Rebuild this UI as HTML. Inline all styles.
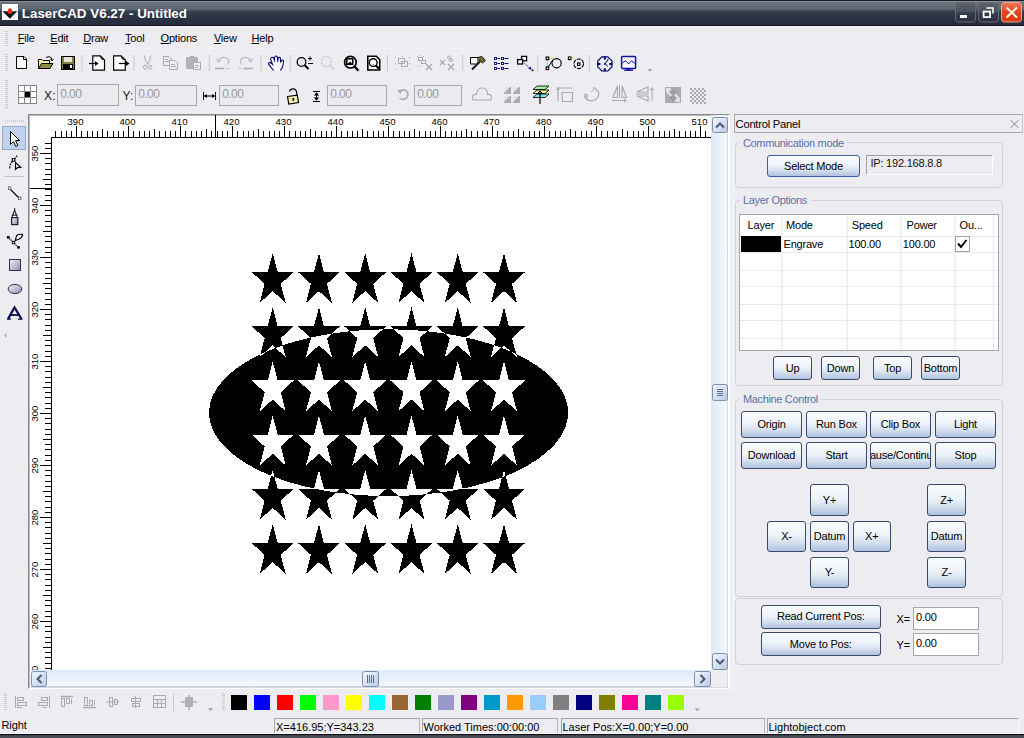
<!DOCTYPE html>
<html><head><meta charset="utf-8"><style>
html,body{margin:0;padding:0;width:1024px;height:738px;overflow:hidden;background:#EDECF1;font-family:"Liberation Sans",sans-serif;font-size:11px;color:#000}
.a{position:absolute}
.t{position:absolute;white-space:pre;line-height:1}
u{text-decoration:underline;text-underline-offset:1px}
</style></head><body>
<div class="a" style="left:0;top:0;width:1024px;height:26px;background:linear-gradient(#151A25 0px,#151A25 1px,#8A8E98 1px,#8A8E98 2px,#6C727C 2px,#5E6874 9px,#4F5A66 10px,#3A4553 11px,#323D4B 12px,#2C3646 16px,#252B3B 25px,#0F131C 25px,#0F131C 26px)"></div><div class="a" style="left:0;top:26px;width:1024px;height:1px;background:#F6F7FB"></div>
<svg class="a" style="left:2px;top:4px" width="16" height="16">
<rect x="0" y="0" width="16" height="16" fill="#fff"/>
<path d="M0.4 7.2 L15.4 7.2 L7.9 14.7 Z" fill="#0C1622"/>
<ellipse cx="8" cy="7.2" rx="2.2" ry="2.9" fill="#E52A14"/>
</svg>
<div class="t" style="left:21.80px;top:6.56px;font-size:13.4px;letter-spacing:0px;color:#fff;font-weight:bold">LaserCAD V6.27 - Untitled</div>

<svg class="a" style="left:950px;top:0" width="74" height="25">
 <defs>
  <linearGradient id="tbg" x1="0" y1="0" x2="0" y2="1"><stop offset="0" stop-color="#5E646E"/><stop offset="0.45" stop-color="#4A525E"/><stop offset="0.55" stop-color="#343C4A"/><stop offset="1" stop-color="#2A3242"/></linearGradient>
  <linearGradient id="tbr" x1="0" y1="0" x2="0" y2="1"><stop offset="0" stop-color="#f0785a"/><stop offset="0.5" stop-color="#e2441e"/><stop offset="1" stop-color="#d83a14"/></linearGradient>
 </defs>
 <rect x="5.5" y="2.5" width="20" height="19.5" rx="3" fill="url(#tbg)" stroke="#666A72"/>
 <rect x="10" y="15" width="7" height="3" fill="#fff"/>
 <rect x="28.5" y="2.5" width="20" height="19.5" rx="3" fill="url(#tbg)" stroke="#666A72"/>
 <path d="M36.5 8 h6.5 v5.5" fill="none" stroke="#fff" stroke-width="1.5"/>
 <rect x="33.6" y="11.6" width="6.5" height="5.5" fill="none" stroke="#fff" stroke-width="1.8"/>
 <rect x="51.5" y="2.5" width="20" height="19.5" rx="3" fill="url(#tbr)" stroke="#f3a48f"/>
 <path d="M56.5 7.5 L67 17.5 M67 7.5 L56.5 17.5" stroke="#FFF6E6" stroke-width="2"/>
</svg>
<svg class="a" style="left:0;top:0" width="20" height="50"><rect x="5" y="31" width="3" height="1" fill="#C9C8D0"/><rect x="5" y="33" width="3" height="1" fill="#C9C8D0"/><rect x="5" y="35" width="3" height="1" fill="#C9C8D0"/><rect x="5" y="37" width="3" height="1" fill="#C9C8D0"/><rect x="5" y="39" width="3" height="1" fill="#C9C8D0"/><rect x="5" y="41" width="3" height="1" fill="#C9C8D0"/><rect x="5" y="43" width="3" height="1" fill="#C9C8D0"/><rect x="5" y="45" width="3" height="1" fill="#C9C8D0"/></svg><div class="t" style="left:17.80px;top:32.89px;font-size:11px;letter-spacing:-0.2px"><u>F</u>ile</div><div class="t" style="left:50.30px;top:32.89px;font-size:11px;letter-spacing:-0.2px"><u>E</u>dit</div><div class="t" style="left:83.20px;top:32.89px;font-size:11px;letter-spacing:-0.2px"><u>D</u>raw</div><div class="t" style="left:125.00px;top:32.89px;font-size:11px;letter-spacing:-0.2px"><u>T</u>ool</div><div class="t" style="left:160.60px;top:32.89px;font-size:11px;letter-spacing:-0.2px"><u>O</u>ptions</div><div class="t" style="left:213.90px;top:32.89px;font-size:11px;letter-spacing:-0.2px"><u>V</u>iew</div><div class="t" style="left:251.50px;top:32.89px;font-size:11px;letter-spacing:-0.2px"><u>H</u>elp</div>
<svg class="a" style="left:0;top:0" width="1024" height="112"><rect x="0" y="48" width="657" height="1" fill="#F1F1F4"/><rect x="656" y="48" width="1" height="28" fill="#EFEFF3"/><rect x="0" y="79" width="899" height="1" fill="#F1F1F4"/><rect x="897" y="79" width="1" height="33" fill="#EFEFF3"/><rect x="5" y="54" width="3" height="1" fill="#C9C8D0"/><rect x="5" y="56" width="3" height="1" fill="#C9C8D0"/><rect x="5" y="58" width="3" height="1" fill="#C9C8D0"/><rect x="5" y="60" width="3" height="1" fill="#C9C8D0"/><rect x="5" y="62" width="3" height="1" fill="#C9C8D0"/><rect x="5" y="64" width="3" height="1" fill="#C9C8D0"/><rect x="5" y="66" width="3" height="1" fill="#C9C8D0"/><rect x="5" y="68" width="3" height="1" fill="#C9C8D0"/><rect x="5" y="70" width="3" height="1" fill="#C9C8D0"/><rect x="5" y="80" width="3" height="1" fill="#C9C8D0"/><rect x="5" y="82" width="3" height="1" fill="#C9C8D0"/><rect x="5" y="84" width="3" height="1" fill="#C9C8D0"/><rect x="5" y="86" width="3" height="1" fill="#C9C8D0"/><rect x="5" y="88" width="3" height="1" fill="#C9C8D0"/><rect x="5" y="90" width="3" height="1" fill="#C9C8D0"/><rect x="5" y="92" width="3" height="1" fill="#C9C8D0"/><rect x="5" y="94" width="3" height="1" fill="#C9C8D0"/><rect x="5" y="96" width="3" height="1" fill="#C9C8D0"/><rect x="5" y="98" width="3" height="1" fill="#C9C8D0"/><rect x="5" y="100" width="3" height="1" fill="#C9C8D0"/><rect x="5" y="102" width="3" height="1" fill="#C9C8D0"/><rect x="5" y="104" width="3" height="1" fill="#C9C8D0"/><rect x="5" y="106" width="3" height="1" fill="#C9C8D0"/><rect x="5" y="108" width="3" height="1" fill="#C9C8D0"/><rect x="81.5" y="55" width="1" height="16" fill="#C8C7CE"/><rect x="133.5" y="55" width="1" height="16" fill="#C8C7CE"/><rect x="208.7" y="55" width="1" height="16" fill="#C8C7CE"/><rect x="260.5" y="55" width="1" height="16" fill="#C8C7CE"/><rect x="289.8" y="55" width="1" height="16" fill="#C8C7CE"/><rect x="387.0" y="55" width="1" height="16" fill="#C8C7CE"/><rect x="462.3" y="55" width="1" height="16" fill="#C8C7CE"/><rect x="537.3" y="55" width="1" height="16" fill="#C8C7CE"/><rect x="588.9" y="55" width="1" height="16" fill="#C8C7CE"/><path d="M16.5 56.5 H24 L26.5 59 V68.5 H16.5 Z" fill="#fff" stroke="#000"/><path d="M23.5 56.5 V59.5 H26.5" fill="none" stroke="#000"/><path d="M38.5 59.5 H42 L43 60.5 H49.5 V68.5 H38.5 Z" fill="#F2F29A" stroke="#000"/><path d="M38.5 68.5 L41.5 63.5 H53 L50 68.5 Z" fill="#8C8C3C" stroke="#000"/><path d="M46 57.5 Q49 55.5 51.5 58 L52 60" fill="none" stroke="#000"/><path d="M50.5 59 L52 61 L53.5 59" fill="none" stroke="#000"/><rect x="61.5" y="56.5" width="13" height="13" fill="#808040" stroke="#000"/><rect x="64" y="57" width="8" height="5" fill="#E6E6D6"/><rect x="63" y="64" width="10" height="5" fill="#000"/><rect x="70" y="65" width="2" height="3" fill="#fff"/><path d="M92.8 55.8 H100.3 L104.5 60 V70.2 H92.8 Z" fill="#fff" stroke="#000" stroke-width="1.2"/><path d="M100.5 56 Q100.5 59.8 104.3 59.8" fill="none" stroke="#000"/><path d="M89 63.5 H97" stroke="#000" stroke-width="1.2"/><path d="M95 61 L98.5 63.5 L95 66 Z" fill="#000"/><path d="M113.6 55.8 H121.1 L125.3 60 V70.2 H113.6 Z" fill="#fff" stroke="#000" stroke-width="1.2"/><path d="M121.3 56 Q121.3 59.8 125.1 59.8" fill="none" stroke="#000"/><path d="M119 63.5 H127" stroke="#000" stroke-width="1.2"/><path d="M126 61 L129.5 63.5 L126 66 Z" fill="#000"/><path d="M144.5 55.5 Q145 61 148 64.5 M150.8 55.5 Q150.3 61 147.3 64.5" stroke="#ABABAF" fill="none"/><ellipse cx="145.2" cy="67.2" rx="1.7" ry="2" fill="none" stroke="#ABABAF"/><ellipse cx="150.2" cy="67.2" rx="1.7" ry="2" fill="none" stroke="#ABABAF"/><path d="M163.5 56.5 H169 L171.5 59 V65.5 H163.5 Z" fill="#EDECF1" stroke="#ABABAF"/><path d="M169.5 60.5 H175 L177.5 63 V69.5 H169.5 Z" fill="#EDECF1" stroke="#ABABAF"/><path d="M165 59.5 H168 M165 61.5 H169 M171 64.5 H175 M171 66.5 H176" stroke="#ABABAF"/><rect x="186.5" y="57.5" width="11" height="11" rx="1" fill="#B4B4B6" stroke="#ABABAF"/><rect x="190" y="56" width="4" height="2" fill="#ABABAF"/><rect x="193.5" y="62.5" width="7" height="7" fill="#F2F2F4" stroke="#ABABAF"/><path d="M195 65.5 H199 M195 67.5 H198" stroke="#ABABAF"/><path d="M218 60 Q223 55.5 228 59 Q230.5 62 227 64.5" fill="none" stroke="#ABABAF"/><path d="M216.5 58.5 L218 62 L221 60" fill="none" stroke="#ABABAF"/><path d="M215 68.5 H224" stroke="#ABABAF" stroke-width="1.5"/><path d="M225.5 68.5 H230" stroke="#ABABAF" stroke-dasharray="1 1"/><path d="M251 60 Q246 55.5 241 59 Q238.5 62 242 64.5" fill="none" stroke="#ABABAF"/><path d="M252.5 58.5 L251 62 L248 60" fill="none" stroke="#ABABAF"/><path d="M244 68.5 H253" stroke="#ABABAF" stroke-width="1.5"/><path d="M238.5 68.5 H243" stroke="#ABABAF" stroke-dasharray="1 1"/><path d="M273.6 70.5 L268.6 64.2 Q268.2 62.5 270 62.4 L272.6 64.4 L270.6 59.2 Q270.6 57.4 272.2 57.3 Q273.6 57.3 274.1 59 L274.6 61.6 L274.5 57.4 Q275.2 56 276.4 56.1 Q277.5 56.4 277.5 58 L277.7 61.6 L278.2 58.2 Q278.9 57.1 280 57.5 Q280.6 58 280.5 59.5 L280.5 62.5 L281.5 60.4 Q282.7 59.4 283.5 60.7 L283.2 64.2 L282.4 67.2 L280.4 70.4" fill="#F8F8FF" stroke="#000068" stroke-width="1.05"/><circle cx="301.5" cy="62" r="4.3" fill="none" stroke="#000" stroke-width="1.3"/><path d="M304.5 65 L308.5 69" stroke="#000" stroke-width="2"/><path d="M308 58.5 H312 M310 56.5 V60.5 M308 63.5 H313" stroke="#000"/><circle cx="326.5" cy="61.5" r="5" fill="none" stroke="#C0C0C4" stroke-width="1.2" stroke-dasharray="1.5 1"/><path d="M330 65.5 L334 69.5" stroke="#C0C0C4" stroke-width="1.5"/><circle cx="350.4" cy="62.2" r="5.8" fill="#fff" stroke="#000" stroke-width="1.7"/><rect x="346.8" y="58.8" width="6" height="5.5" fill="#fff" stroke="#000" stroke-width="1.5"/><path d="M347.5 64 L350 61.5 L352.5 64 Z" fill="#000"/><path d="M354.5 66.5 L358.5 70.8" stroke="#000" stroke-width="2.2"/><path d="M367.8 56.3 H376.3 L379.7 59.7 V70 H367.8 Z" fill="#fff" stroke="#000" stroke-width="1.6"/><circle cx="373.2" cy="62.6" r="3.9" fill="none" stroke="#000" stroke-width="1.4"/><path d="M375.6 65.2 L379 68.8" stroke="#000" stroke-width="2"/><path d="M372 64 L374.5 64 L373.2 65.2 Z" fill="#888"/><rect x="398.5" y="58.5" width="6" height="5" fill="none" stroke="#ABABAF"/><rect x="401.5" y="61.5" width="6" height="5" fill="none" stroke="#ABABAF"/><rect x="395" y="57" width="1" height="1" fill="#ABABAF"/><rect x="402" y="56" width="1" height="1" fill="#ABABAF"/><rect x="409" y="57" width="1" height="1" fill="#ABABAF"/><rect x="395" y="63" width="1" height="1" fill="#ABABAF"/><rect x="409" y="63" width="1" height="1" fill="#ABABAF"/><rect x="395" y="69" width="1" height="1" fill="#ABABAF"/><rect x="402" y="69" width="1" height="1" fill="#ABABAF"/><rect x="409" y="69" width="1" height="1" fill="#ABABAF"/><rect x="418.5" y="57.5" width="4" height="3" fill="none" stroke="#ABABAF"/><rect x="421.5" y="60.5" width="4" height="3" fill="none" stroke="#ABABAF"/><path d="M426 64 L432 70 M432 64 L426 70" stroke="#ABABAF" stroke-width="1.4"/><rect x="417" y="56" width="1" height="1" fill="#ABABAF"/><rect x="420" y="55" width="1" height="1" fill="#ABABAF"/><rect x="423" y="56" width="1" height="1" fill="#ABABAF"/><rect x="417" y="66" width="1" height="1" fill="#ABABAF"/><rect x="420" y="66" width="1" height="1" fill="#ABABAF"/><path d="M440 60 L445 65 M445 60 L440 65 M448 64 L454 70 M454 64 L448 70" stroke="#ABABAF" stroke-width="1.3"/><circle cx="449" cy="57.5" r="1.5" fill="none" stroke="#ABABAF"/><circle cx="451" cy="60" r="1.5" fill="none" stroke="#ABABAF"/><path d="M470.5 57.5 H478 V64 H470.5 Z" fill="#fff" stroke="#000"/><path d="M472 69.5 L480 61.5" stroke="#202020" stroke-width="2.2"/><path d="M477.5 57.5 L482 56.5 L485.5 60.5 L482.5 63 L479 60" fill="#6B6B30" stroke="#000" stroke-width="0.8"/><rect x="494.5" y="57.5" width="2" height="2" fill="#fff" stroke="#000070" stroke-width="0.9"/><path d="M497.5 58.5 H500" stroke="#000070"/><rect x="501.5" y="57.5" width="2" height="2" fill="#fff" stroke="#000070" stroke-width="0.9"/><path d="M504.5 58.5 H508.5" stroke="#000070"/><rect x="494.5" y="62.5" width="2" height="2" fill="#fff" stroke="#000070" stroke-width="0.9"/><path d="M497.5 63.5 H500" stroke="#000070"/><rect x="501.5" y="62.5" width="2" height="2" fill="#fff" stroke="#000070" stroke-width="0.9"/><path d="M504.5 63.5 H508.5" stroke="#000070"/><rect x="494.5" y="67.5" width="2" height="2" fill="#fff" stroke="#000070" stroke-width="0.9"/><path d="M497.5 68.5 H500" stroke="#000070"/><rect x="501.5" y="67.5" width="2" height="2" fill="#fff" stroke="#000070" stroke-width="0.9"/><path d="M504.5 68.5 H508.5" stroke="#000070"/><rect x="521.6" y="56.4" width="5" height="4.4" fill="#fff" stroke="#000" stroke-width="1.3"/><rect x="517.6" y="59.6" width="5" height="4.4" fill="#fff" stroke="#000" stroke-width="1.3"/><path d="M524.5 63.5 L530.5 68.8" stroke="#0000A0" stroke-width="0.9" stroke-dasharray="1.2 0.6"/><path d="M531.5 69.6 L528.2 68.8 L530.6 66.6 Z" fill="#0000A0"/><rect x="531.6" y="69.4" width="1.8" height="1.8" fill="#600020"/><path d="M547.4 59.5 V67.5" stroke="#80D8D8" stroke-width="1.2"/><path d="M548.5 58.3 H554" stroke="#E0E070" stroke-width="1.2"/><circle cx="556.6" cy="63.2" r="4.6" fill="none" stroke="#000" stroke-width="1.15"/><path d="M548 67.5 L552.6 60.2" stroke="#000" stroke-width="1"/><rect x="546.1" y="57" width="2.6" height="2.6" fill="none" stroke="#000" stroke-width="1.1"/><rect x="546.1" y="67" width="2.6" height="2.6" fill="none" stroke="#000" stroke-width="1.1"/><rect x="568.4" y="57" width="2.6" height="2.6" fill="none" stroke="#000" stroke-width="1.1"/><path d="M571.5 58.3 H575" stroke="#E0E070" stroke-width="1.2"/><circle cx="578.7" cy="63.8" r="4.8" fill="none" stroke="#000" stroke-width="1.15" stroke-dasharray="4 1"/><rect x="577.5" y="63" width="2.4" height="2.4" fill="none" stroke="#000" stroke-width="1.1"/><path d="M611.96 66.85 L607.80 71.01 L601.90 71.01 L597.74 66.85 L597.74 60.95 L601.90 56.79 L607.80 56.79 L611.96 60.95 Z" fill="none" stroke="#000070" stroke-width="1.2"/><path d="M604.85 56.5 V59.5 M604.85 68.3 V71.3 M597.4 63.9 H600.4 M609.3 63.9 H612.3" stroke="#000070" stroke-width="2"/><path d="M608.4 59 L605.3 63.6 L607.6 66.6" fill="none" stroke="#000070" stroke-width="1"/><rect x="604" y="63.1" width="1.6" height="1.6" fill="#000070"/><rect x="621.6" y="56.4" width="14" height="12" rx="1" fill="#F4F4FC" stroke="#1010A0" stroke-width="1.5"/><path d="M622.4 63 L625.5 60.8 L628.6 64 L631.6 60.8 L635 63.6" fill="none" stroke="#1010A0" stroke-width="1"/><rect x="626.5" y="68.4" width="4" height="1.4" fill="#1010A0"/><rect x="624.2" y="69.6" width="8.8" height="1.3" fill="#1010A0"/><path d="M647.5 69 H652.5 L650 71.5 Z" fill="#9B9BA2"/><rect x="18.5" y="85.5" width="18" height="18" fill="#fff" stroke="#888"/><path d="M24.5 85.5 V103.5 M30.5 85.5 V103.5 M18.5 91.5 H36.5 M18.5 97.5 H36.5" stroke="#888"/><rect x="25" y="92" width="5" height="5" fill="#000"/></svg><div class="t" style="left:44.00px;top:90.34px;font-size:12px;letter-spacing:0.2px;color:#181818">X:</div><div class="t" style="left:122.50px;top:90.34px;font-size:12px;letter-spacing:0.2px;color:#181818">Y:</div><div class="a" style="left:57px;top:84px;width:62px;height:22px;border:1px solid #A8A8AC;box-sizing:border-box;background:#EBEAEF"></div><div class="t" style="left:60.30px;top:87.64px;font-size:12px;letter-spacing:-0.6px;color:#98989C">0.00</div><div class="a" style="left:135px;top:85px;width:62px;height:21px;border:1px solid #A8A8AC;box-sizing:border-box;background:#EBEAEF"></div><div class="t" style="left:138.30px;top:87.64px;font-size:12px;letter-spacing:-0.6px;color:#98989C">0.00</div><div class="a" style="left:219px;top:85px;width:60px;height:21px;border:1px solid #A8A8AC;box-sizing:border-box;background:#EBEAEF"></div><div class="t" style="left:222.30px;top:87.64px;font-size:12px;letter-spacing:-0.6px;color:#98989C">0.00</div><div class="a" style="left:327px;top:85px;width:60px;height:21px;border:1px solid #A8A8AC;box-sizing:border-box;background:#EBEAEF"></div><div class="t" style="left:330.30px;top:87.64px;font-size:12px;letter-spacing:-0.6px;color:#98989C">0.00</div><div class="a" style="left:414px;top:85px;width:48px;height:21px;border:1px solid #A8A8AC;box-sizing:border-box;background:#EBEAEF"></div><div class="t" style="left:417.30px;top:87.64px;font-size:12px;letter-spacing:-0.6px;color:#98989C">0.00</div><svg class="a" style="left:0;top:76" width="1024" height="36"><g transform="translate(0,-76)"><path d="M203.5 92 V100 M215.5 92 V100 M204 96 H215" stroke="#000"/><path d="M204 96 L207 94 V98 Z M215 96 L212 94 V98 Z" fill="#000"/><path d="M289.5 91.5 Q290 88.8 293 88.8 Q296.5 88.8 296.8 93.5 V95" fill="none" stroke="#000" stroke-width="1.2"/><path d="M287.5 96.5 L297.3 95.2 L298.5 102.5 L288.8 104 Z" fill="#F2F0B0" stroke="#000" stroke-width="1.2"/><rect x="292.5" y="98" width="1.6" height="2.8" fill="#000"/><path d="M313 91.5 H320 M313 101.5 H320 M316.5 93 V100" stroke="#000"/><path d="M316.5 92.2 L313.8 95.5 H319.2 Z M316.5 100.8 L313.8 97.5 H319.2 Z" fill="#000"/><path d="M400 92 Q403 88.5 406.5 91 Q409.5 95 406 98.5 Q402.5 100.5 399.5 98" fill="none" stroke="#ABABAF" stroke-width="1.6"/><path d="M397.5 90 L400.5 94.5 L402 89.5 Z" fill="#ABABAF"/><path d="M474 100 Q472 100 472.5 97 Q473 94 476.5 94.5 Q477 88 482 88 Q487.5 88 487.5 94.5 Q491.5 94 491.5 97.5 Q491.5 100 489 100 Z" fill="none" stroke="#ABABAF" stroke-width="1.2"/><rect x="504" y="87" width="7" height="7" fill="#ABABAF"/><path d="M504 87 L510 87 L504 93 Z" fill="#E5E5E8"/><rect x="513" y="87" width="7" height="7" fill="#ABABAF"/><path d="M513 87 L519 87 L513 93 Z" fill="#E5E5E8"/><rect x="504" y="96" width="7" height="7" fill="#ABABAF"/><path d="M504 96 L510 96 L504 102 Z" fill="#E5E5E8"/><rect x="513" y="96" width="7" height="7" fill="#ABABAF"/><path d="M513 96 L519 96 L513 102 Z" fill="#E5E5E8"/><path d="M533 89.5 L537 86 H549 L545 89.5 Z" fill="#A0F0A0" stroke="#000" stroke-width="0.8"/><path d="M533 93.5 L537 90 H549 L545 93.5 Z" fill="#F0F080" stroke="#000" stroke-width="0.8"/><path d="M533 97.5 L537 94 H549 L545 97.5 Z" fill="#80E0F0" stroke="#000" stroke-width="0.8"/><path d="M540 91 V104" stroke="#000" stroke-width="1.2"/><path d="M537 94 L540 91 L543 94" fill="none" stroke="#000"/><path d="M558 87 V101 M558 88 H572 M562 92.5 H572.5 V101.5 H562.5 Z" fill="none" stroke="#ABABAF" stroke-width="1.2"/><path d="M558 87 L556 90 H560 Z" fill="#ABABAF"/><path d="M586 94 Q584 99 589 100.5 Q595 101.5 598 97 Q600 92 596.5 90" fill="none" stroke="#ABABAF" stroke-width="1.3"/><circle cx="586" cy="96" r="1.8" fill="none" stroke="#ABABAF"/><path d="M591 92 L595 88 M593 88 H596 V91" fill="none" stroke="#ABABAF"/><path d="M613 97.5 L617.5 86 V97.5 Z M626.5 97.5 L622 86 V97.5 Z" fill="none" stroke="#ABABAF" stroke-width="1.2"/><path d="M619.5 85 V98" stroke="#ABABAF"/><path d="M612 100.5 H624" stroke="#ABABAF"/><path d="M624 98.5 L627 100.5 L624 102.5 Z" fill="#ABABAF"/><path d="M637 92 L648 87 V92 Z M637 96 L648 101 V96 Z" fill="none" stroke="#ABABAF" stroke-width="1.2"/><path d="M636 94 H649" stroke="#ABABAF"/><path d="M652 101 V89" stroke="#ABABAF"/><path d="M650 90 L652 87 L654 90 Z" fill="#ABABAF"/><rect x="665.5" y="87.5" width="15" height="15" fill="#E2E2E5" stroke="#ABABAF"/><path d="M670 88 H680 V98 Z M666 92 L676 102 H666 Z" fill="#ABABAF"/><path d="M673 88 L677 92 L673 96 L669 92 Z M673 94 L677 98 L673 102 L669 98 Z" fill="#A0A0A4"/><rect x="690" y="88" width="2" height="2" fill="#ABABAF"/><rect x="690" y="92" width="2" height="2" fill="#ABABAF"/><rect x="690" y="96" width="2" height="2" fill="#ABABAF"/><rect x="690" y="100" width="2" height="2" fill="#ABABAF"/><rect x="692" y="90" width="2" height="2" fill="#ABABAF"/><rect x="692" y="94" width="2" height="2" fill="#ABABAF"/><rect x="692" y="98" width="2" height="2" fill="#ABABAF"/><rect x="692" y="102" width="2" height="2" fill="#ABABAF"/><rect x="694" y="88" width="2" height="2" fill="#ABABAF"/><rect x="694" y="92" width="2" height="2" fill="#ABABAF"/><rect x="694" y="96" width="2" height="2" fill="#ABABAF"/><rect x="694" y="100" width="2" height="2" fill="#ABABAF"/><rect x="696" y="90" width="2" height="2" fill="#ABABAF"/><rect x="696" y="94" width="2" height="2" fill="#ABABAF"/><rect x="696" y="98" width="2" height="2" fill="#ABABAF"/><rect x="696" y="102" width="2" height="2" fill="#ABABAF"/><rect x="698" y="88" width="2" height="2" fill="#ABABAF"/><rect x="698" y="92" width="2" height="2" fill="#ABABAF"/><rect x="698" y="96" width="2" height="2" fill="#ABABAF"/><rect x="698" y="100" width="2" height="2" fill="#ABABAF"/><rect x="700" y="90" width="2" height="2" fill="#ABABAF"/><rect x="700" y="94" width="2" height="2" fill="#ABABAF"/><rect x="700" y="98" width="2" height="2" fill="#ABABAF"/><rect x="700" y="102" width="2" height="2" fill="#ABABAF"/><rect x="702" y="88" width="2" height="2" fill="#ABABAF"/><rect x="702" y="92" width="2" height="2" fill="#ABABAF"/><rect x="702" y="96" width="2" height="2" fill="#ABABAF"/><rect x="702" y="100" width="2" height="2" fill="#ABABAF"/><rect x="704" y="90" width="2" height="2" fill="#ABABAF"/><rect x="704" y="94" width="2" height="2" fill="#ABABAF"/><rect x="704" y="98" width="2" height="2" fill="#ABABAF"/><rect x="704" y="102" width="2" height="2" fill="#ABABAF"/></g></svg>
<div class="a" style="left:28px;top:114px;width:700px;height:573px;border:1px solid #8a8a8e;border-right-color:#fff;border-bottom-color:#fff;background:#fff"></div>
<div class="a" style="left:29px;top:115px;width:1px;height:572px;background:#b9b9be"></div>
<div class="a" style="left:29px;top:115px;width:698px;height:1px;background:#b9b9be"></div>
<svg class="a" style="left:0;top:0" width="1024" height="738"><defs><clipPath id="rclip"><rect x="29" y="115" width="682" height="555"/></clipPath></defs><path stroke="#000" stroke-width="1" fill="none" d="M55.5 131.0 V138 M61.5 131.0 V138 M66.5 131.0 V138 M71.5 131.0 V138 M76.5 126.0 V138 M81.5 131.0 V138 M87.5 131.0 V138 M92.5 131.0 V138 M97.5 131.0 V138 M102.5 129.0 V138 M107.5 131.0 V138 M113.5 131.0 V138 M118.5 131.0 V138 M123.5 131.0 V138 M128.5 126.0 V138 M133.5 131.0 V138 M139.5 131.0 V138 M144.5 131.0 V138 M149.5 131.0 V138 M154.5 129.0 V138 M159.5 131.0 V138 M165.5 131.0 V138 M170.5 131.0 V138 M175.5 131.0 V138 M180.5 126.0 V138 M185.5 131.0 V138 M191.5 131.0 V138 M196.5 131.0 V138 M201.5 131.0 V138 M206.5 129.0 V138 M211.5 131.0 V138 M217.5 131.0 V138 M222.5 131.0 V138 M227.5 131.0 V138 M232.5 126.0 V138 M237.5 131.0 V138 M243.5 131.0 V138 M248.5 131.0 V138 M253.5 131.0 V138 M258.5 129.0 V138 M263.5 131.0 V138 M269.5 131.0 V138 M274.5 131.0 V138 M279.5 131.0 V138 M284.5 126.0 V138 M289.5 131.0 V138 M295.5 131.0 V138 M300.5 131.0 V138 M305.5 131.0 V138 M310.5 129.0 V138 M315.5 131.0 V138 M321.5 131.0 V138 M326.5 131.0 V138 M331.5 131.0 V138 M336.5 126.0 V138 M341.5 131.0 V138 M347.5 131.0 V138 M352.5 131.0 V138 M357.5 131.0 V138 M362.5 129.0 V138 M367.5 131.0 V138 M373.5 131.0 V138 M378.5 131.0 V138 M383.5 131.0 V138 M388.5 126.0 V138 M393.5 131.0 V138 M399.5 131.0 V138 M404.5 131.0 V138 M409.5 131.0 V138 M414.5 129.0 V138 M419.5 131.0 V138 M425.5 131.0 V138 M430.5 131.0 V138 M435.5 131.0 V138 M440.5 126.0 V138 M445.5 131.0 V138 M451.5 131.0 V138 M456.5 131.0 V138 M461.5 131.0 V138 M466.5 129.0 V138 M471.5 131.0 V138 M477.5 131.0 V138 M482.5 131.0 V138 M487.5 131.0 V138 M492.5 126.0 V138 M497.5 131.0 V138 M503.5 131.0 V138 M508.5 131.0 V138 M513.5 131.0 V138 M518.5 129.0 V138 M523.5 131.0 V138 M529.5 131.0 V138 M534.5 131.0 V138 M539.5 131.0 V138 M544.5 126.0 V138 M549.5 131.0 V138 M555.5 131.0 V138 M560.5 131.0 V138 M565.5 131.0 V138 M570.5 129.0 V138 M575.5 131.0 V138 M581.5 131.0 V138 M586.5 131.0 V138 M591.5 131.0 V138 M596.5 126.0 V138 M601.5 131.0 V138 M607.5 131.0 V138 M612.5 131.0 V138 M617.5 131.0 V138 M622.5 129.0 V138 M627.5 131.0 V138 M633.5 131.0 V138 M638.5 131.0 V138 M643.5 131.0 V138 M648.5 126.0 V138 M653.5 131.0 V138 M659.5 131.0 V138 M664.5 131.0 V138 M669.5 131.0 V138 M674.5 129.0 V138 M679.5 131.0 V138 M685.5 131.0 V138 M690.5 131.0 V138 M695.5 131.0 V138 M700.5 126.0 V138 M705.5 131.0 V138 M45.0 143.5 H52 M45.0 148.5 H52 M40.0 153.5 H52 M45.0 158.5 H52 M45.0 163.5 H52 M45.0 169.5 H52 M45.0 174.5 H52 M43.0 179.5 H52 M45.0 184.5 H52 M45.0 189.5 H52 M45.0 195.5 H52 M45.0 200.5 H52 M40.0 205.5 H52 M45.0 210.5 H52 M45.0 215.5 H52 M45.0 221.5 H52 M45.0 226.5 H52 M43.0 231.5 H52 M45.0 236.5 H52 M45.0 241.5 H52 M45.0 247.5 H52 M45.0 252.5 H52 M40.0 257.5 H52 M45.0 262.5 H52 M45.0 267.5 H52 M45.0 273.5 H52 M45.0 278.5 H52 M43.0 283.5 H52 M45.0 288.5 H52 M45.0 293.5 H52 M45.0 299.5 H52 M45.0 304.5 H52 M40.0 309.5 H52 M45.0 314.5 H52 M45.0 319.5 H52 M45.0 325.5 H52 M45.0 330.5 H52 M43.0 335.5 H52 M45.0 340.5 H52 M45.0 345.5 H52 M45.0 351.5 H52 M45.0 356.5 H52 M40.0 361.5 H52 M45.0 366.5 H52 M45.0 371.5 H52 M45.0 377.5 H52 M45.0 382.5 H52 M43.0 387.5 H52 M45.0 392.5 H52 M45.0 397.5 H52 M45.0 403.5 H52 M45.0 408.5 H52 M40.0 413.5 H52 M45.0 418.5 H52 M45.0 423.5 H52 M45.0 429.5 H52 M45.0 434.5 H52 M43.0 439.5 H52 M45.0 444.5 H52 M45.0 449.5 H52 M45.0 455.5 H52 M45.0 460.5 H52 M40.0 465.5 H52 M45.0 470.5 H52 M45.0 475.5 H52 M45.0 481.5 H52 M45.0 486.5 H52 M43.0 491.5 H52 M45.0 496.5 H52 M45.0 501.5 H52 M45.0 507.5 H52 M45.0 512.5 H52 M40.0 517.5 H52 M45.0 522.5 H52 M45.0 527.5 H52 M45.0 533.5 H52 M45.0 538.5 H52 M43.0 543.5 H52 M45.0 548.5 H52 M45.0 553.5 H52 M45.0 559.5 H52 M45.0 564.5 H52 M40.0 569.5 H52 M45.0 574.5 H52 M45.0 579.5 H52 M45.0 585.5 H52 M45.0 590.5 H52 M43.0 595.5 H52 M45.0 600.5 H52 M45.0 605.5 H52 M45.0 611.5 H52 M45.0 616.5 H52 M40.0 621.5 H52 M45.0 626.5 H52 M45.0 631.5 H52 M45.0 637.5 H52 M45.0 642.5 H52 M43.0 647.5 H52 M45.0 652.5 H52 M45.0 657.5 H52 M45.0 663.5 H52 M45.0 668.5 H52 M215.5 115 V138 M30 188.5 H52 M51.5 138 V670 M51 137.5 H711"/><g font-size="9.5" fill="#000" clip-path="url(#rclip)"><text x="75.5" y="125" text-anchor="middle">390</text><text x="127.5" y="125" text-anchor="middle">400</text><text x="179.5" y="125" text-anchor="middle">410</text><text x="231.5" y="125" text-anchor="middle">420</text><text x="283.5" y="125" text-anchor="middle">430</text><text x="335.5" y="125" text-anchor="middle">440</text><text x="387.5" y="125" text-anchor="middle">450</text><text x="439.5" y="125" text-anchor="middle">460</text><text x="491.5" y="125" text-anchor="middle">470</text><text x="543.5" y="125" text-anchor="middle">480</text><text x="595.5" y="125" text-anchor="middle">490</text><text x="647.5" y="125" text-anchor="middle">500</text><text x="699.5" y="125" text-anchor="middle">510</text><text transform="translate(38.2 153.6) rotate(-90)" text-anchor="middle">350</text><text transform="translate(38.2 205.6) rotate(-90)" text-anchor="middle">340</text><text transform="translate(38.2 257.6) rotate(-90)" text-anchor="middle">330</text><text transform="translate(38.2 309.6) rotate(-90)" text-anchor="middle">320</text><text transform="translate(38.2 361.6) rotate(-90)" text-anchor="middle">310</text><text transform="translate(38.2 413.6) rotate(-90)" text-anchor="middle">300</text><text transform="translate(38.2 465.6) rotate(-90)" text-anchor="middle">290</text><text transform="translate(38.2 517.6) rotate(-90)" text-anchor="middle">280</text><text transform="translate(38.2 569.6) rotate(-90)" text-anchor="middle">270</text><text transform="translate(38.2 621.6) rotate(-90)" text-anchor="middle">260</text><text transform="translate(38.2 673.6) rotate(-90)" text-anchor="middle">250</text></g><g shape-rendering="crispEdges"><path fill="#000" fill-rule="evenodd" d="M272.70 253.00 L277.66 272.07 L293.72 272.07 L280.73 283.86 L285.69 302.93 L272.70 291.14 L259.71 302.93 L264.67 283.86 L251.68 272.07 L267.74 272.07 Z M318.96 253.00 L323.92 272.07 L339.98 272.07 L326.99 283.86 L331.95 302.93 L318.96 291.14 L305.97 302.93 L310.93 283.86 L297.94 272.07 L314.00 272.07 Z M365.22 253.00 L370.18 272.07 L386.24 272.07 L373.25 283.86 L378.21 302.93 L365.22 291.14 L352.23 302.93 L357.19 283.86 L344.20 272.07 L360.26 272.07 Z M411.48 253.00 L416.44 272.07 L432.50 272.07 L419.51 283.86 L424.47 302.93 L411.48 291.14 L398.49 302.93 L403.45 283.86 L390.46 272.07 L406.52 272.07 Z M457.74 253.00 L462.70 272.07 L478.76 272.07 L465.77 283.86 L470.73 302.93 L457.74 291.14 L444.75 302.93 L449.71 283.86 L436.72 272.07 L452.78 272.07 Z M504.00 253.00 L508.96 272.07 L525.02 272.07 L512.03 283.86 L516.99 302.93 L504.00 291.14 L491.01 302.93 L495.97 283.86 L482.98 272.07 L499.04 272.07 Z M272.70 307.20 L277.66 326.27 L293.72 326.27 L280.73 338.06 L285.69 357.13 L272.70 345.34 L259.71 357.13 L264.67 338.06 L251.68 326.27 L267.74 326.27 Z M318.96 307.20 L323.92 326.27 L339.98 326.27 L326.99 338.06 L331.95 357.13 L318.96 345.34 L305.97 357.13 L310.93 338.06 L297.94 326.27 L314.00 326.27 Z M365.22 307.20 L370.18 326.27 L386.24 326.27 L373.25 338.06 L378.21 357.13 L365.22 345.34 L352.23 357.13 L357.19 338.06 L344.20 326.27 L360.26 326.27 Z M411.48 307.20 L416.44 326.27 L432.50 326.27 L419.51 338.06 L424.47 357.13 L411.48 345.34 L398.49 357.13 L403.45 338.06 L390.46 326.27 L406.52 326.27 Z M457.74 307.20 L462.70 326.27 L478.76 326.27 L465.77 338.06 L470.73 357.13 L457.74 345.34 L444.75 357.13 L449.71 338.06 L436.72 326.27 L452.78 326.27 Z M504.00 307.20 L508.96 326.27 L525.02 326.27 L512.03 338.06 L516.99 357.13 L504.00 345.34 L491.01 357.13 L495.97 338.06 L482.98 326.27 L499.04 326.27 Z M272.70 361.40 L277.66 380.47 L293.72 380.47 L280.73 392.26 L285.69 411.33 L272.70 399.54 L259.71 411.33 L264.67 392.26 L251.68 380.47 L267.74 380.47 Z M318.96 361.40 L323.92 380.47 L339.98 380.47 L326.99 392.26 L331.95 411.33 L318.96 399.54 L305.97 411.33 L310.93 392.26 L297.94 380.47 L314.00 380.47 Z M365.22 361.40 L370.18 380.47 L386.24 380.47 L373.25 392.26 L378.21 411.33 L365.22 399.54 L352.23 411.33 L357.19 392.26 L344.20 380.47 L360.26 380.47 Z M411.48 361.40 L416.44 380.47 L432.50 380.47 L419.51 392.26 L424.47 411.33 L411.48 399.54 L398.49 411.33 L403.45 392.26 L390.46 380.47 L406.52 380.47 Z M457.74 361.40 L462.70 380.47 L478.76 380.47 L465.77 392.26 L470.73 411.33 L457.74 399.54 L444.75 411.33 L449.71 392.26 L436.72 380.47 L452.78 380.47 Z M504.00 361.40 L508.96 380.47 L525.02 380.47 L512.03 392.26 L516.99 411.33 L504.00 399.54 L491.01 411.33 L495.97 392.26 L482.98 380.47 L499.04 380.47 Z M272.70 415.60 L277.66 434.67 L293.72 434.67 L280.73 446.46 L285.69 465.53 L272.70 453.74 L259.71 465.53 L264.67 446.46 L251.68 434.67 L267.74 434.67 Z M318.96 415.60 L323.92 434.67 L339.98 434.67 L326.99 446.46 L331.95 465.53 L318.96 453.74 L305.97 465.53 L310.93 446.46 L297.94 434.67 L314.00 434.67 Z M365.22 415.60 L370.18 434.67 L386.24 434.67 L373.25 446.46 L378.21 465.53 L365.22 453.74 L352.23 465.53 L357.19 446.46 L344.20 434.67 L360.26 434.67 Z M411.48 415.60 L416.44 434.67 L432.50 434.67 L419.51 446.46 L424.47 465.53 L411.48 453.74 L398.49 465.53 L403.45 446.46 L390.46 434.67 L406.52 434.67 Z M457.74 415.60 L462.70 434.67 L478.76 434.67 L465.77 446.46 L470.73 465.53 L457.74 453.74 L444.75 465.53 L449.71 446.46 L436.72 434.67 L452.78 434.67 Z M504.00 415.60 L508.96 434.67 L525.02 434.67 L512.03 446.46 L516.99 465.53 L504.00 453.74 L491.01 465.53 L495.97 446.46 L482.98 434.67 L499.04 434.67 Z M272.70 469.80 L277.66 488.87 L293.72 488.87 L280.73 500.66 L285.69 519.73 L272.70 507.94 L259.71 519.73 L264.67 500.66 L251.68 488.87 L267.74 488.87 Z M318.96 469.80 L323.92 488.87 L339.98 488.87 L326.99 500.66 L331.95 519.73 L318.96 507.94 L305.97 519.73 L310.93 500.66 L297.94 488.87 L314.00 488.87 Z M365.22 469.80 L370.18 488.87 L386.24 488.87 L373.25 500.66 L378.21 519.73 L365.22 507.94 L352.23 519.73 L357.19 500.66 L344.20 488.87 L360.26 488.87 Z M411.48 469.80 L416.44 488.87 L432.50 488.87 L419.51 500.66 L424.47 519.73 L411.48 507.94 L398.49 519.73 L403.45 500.66 L390.46 488.87 L406.52 488.87 Z M457.74 469.80 L462.70 488.87 L478.76 488.87 L465.77 500.66 L470.73 519.73 L457.74 507.94 L444.75 519.73 L449.71 500.66 L436.72 488.87 L452.78 488.87 Z M504.00 469.80 L508.96 488.87 L525.02 488.87 L512.03 500.66 L516.99 519.73 L504.00 507.94 L491.01 519.73 L495.97 500.66 L482.98 488.87 L499.04 488.87 Z M272.70 524.00 L277.66 543.07 L293.72 543.07 L280.73 554.86 L285.69 573.93 L272.70 562.14 L259.71 573.93 L264.67 554.86 L251.68 543.07 L267.74 543.07 Z M318.96 524.00 L323.92 543.07 L339.98 543.07 L326.99 554.86 L331.95 573.93 L318.96 562.14 L305.97 573.93 L310.93 554.86 L297.94 543.07 L314.00 543.07 Z M365.22 524.00 L370.18 543.07 L386.24 543.07 L373.25 554.86 L378.21 573.93 L365.22 562.14 L352.23 573.93 L357.19 554.86 L344.20 543.07 L360.26 543.07 Z M411.48 524.00 L416.44 543.07 L432.50 543.07 L419.51 554.86 L424.47 573.93 L411.48 562.14 L398.49 573.93 L403.45 554.86 L390.46 543.07 L406.52 543.07 Z M457.74 524.00 L462.70 543.07 L478.76 543.07 L465.77 554.86 L470.73 573.93 L457.74 562.14 L444.75 573.93 L449.71 554.86 L436.72 543.07 L452.78 543.07 Z M504.00 524.00 L508.96 543.07 L525.02 543.07 L512.03 554.86 L516.99 573.93 L504.00 562.14 L491.01 573.93 L495.97 554.86 L482.98 543.07 L499.04 543.07 Z M209.00 412.70 A179.60 83.40 0 1 0 568.20 412.70 A179.60 83.40 0 1 0 209.00 412.70 Z"/></g></svg>
<svg class="a" style="left:0;top:0" width="1024" height="738"><defs><linearGradient id="vtr" x1="0" y1="0" x2="1" y2="0"><stop offset="0" stop-color="#DDE8F8"/><stop offset="1" stop-color="#F6F9FE"/></linearGradient><linearGradient id="htr" x1="0" y1="0" x2="0" y2="1"><stop offset="0" stop-color="#DDE8F8"/><stop offset="1" stop-color="#F6F9FE"/></linearGradient><linearGradient id="sbb" x1="0" y1="0" x2="1" y2="1"><stop offset="0" stop-color="#F4F8FE"/><stop offset="1" stop-color="#B9CBE8"/></linearGradient></defs><rect x="711" y="115" width="16" height="555" fill="url(#vtr)"/><rect x="31" y="670" width="680" height="17" fill="url(#htr)"/><rect x="31" y="686" width="680" height="1" fill="#CDD3DE"/><rect x="711" y="670" width="16" height="17" fill="#EDECF1"/><rect x="727" y="115" width="1" height="573" fill="#D9D8E0"/><rect x="29" y="687" width="699" height="1" fill="#D9D8E0"/><rect x="712.5" y="117.5" width="15" height="15" rx="2" fill="url(#sbb)" stroke="#7E8EAC"/><path d="M716 127.5 L720 123.5 L724 127.5" fill="none" stroke="#4D5A78" stroke-width="2"/><rect x="712.5" y="653.5" width="15" height="16" rx="2" fill="url(#sbb)" stroke="#7E8EAC"/><path d="M716 659.5 L720 663.5 L724 659.5" fill="none" stroke="#4D5A78" stroke-width="2"/><rect x="31.5" y="671.5" width="15" height="15" rx="2" fill="url(#sbb)" stroke="#7E8EAC"/><path d="M41.5 675 L37.5 679 L41.5 683" fill="none" stroke="#4D5A78" stroke-width="2"/><rect x="694.5" y="671.5" width="16" height="15" rx="2" fill="url(#sbb)" stroke="#7E8EAC"/><path d="M700.5 675 L704.5 679 L700.5 683" fill="none" stroke="#4D5A78" stroke-width="2"/><rect x="712.5" y="384.5" width="15" height="16" rx="2" fill="url(#sbb)" stroke="#7E8EAC"/><path d="M717 389.5 H723 M717 391.5 H723 M717 393.5 H723 M717 395.5 H723" stroke="#5E6C88"/><rect x="362.5" y="671.5" width="16" height="15" rx="2" fill="url(#sbb)" stroke="#7E8EAC"/><path d="M367.5 675 V683 M369.5 675 V683 M371.5 675 V683 M373.5 675 V683" stroke="#5E6C88"/></svg>
<svg class="a" style="left:0;top:114" width="28" height="232"><defs><linearGradient id="tbx" x1="0" y1="0" x2="1" y2="1"><stop offset="0" stop-color="#F4F4FA"/><stop offset="1" stop-color="#8C8CB0"/></linearGradient></defs><g transform="translate(0,-114)"><rect x="5" y="120" width="1" height="2" fill="#C9C8D0"/><rect x="7" y="120" width="1" height="2" fill="#C9C8D0"/><rect x="9" y="120" width="1" height="2" fill="#C9C8D0"/><rect x="11" y="120" width="1" height="2" fill="#C9C8D0"/><rect x="13" y="120" width="1" height="2" fill="#C9C8D0"/><rect x="15" y="120" width="1" height="2" fill="#C9C8D0"/><rect x="17" y="120" width="1" height="2" fill="#C9C8D0"/><rect x="19" y="120" width="1" height="2" fill="#C9C8D0"/><rect x="21" y="120" width="1" height="2" fill="#C9C8D0"/><rect x="23" y="120" width="1" height="2" fill="#C9C8D0"/><rect x="2.5" y="126.5" width="23" height="23" fill="#C1D2EE" stroke="#98A8C8"/><path d="M10.5 131.5 V144.5 L13.5 141.5 L15.8 146.5 L17.8 145.5 L15.6 140.5 H19.5 Z" fill="#fff" stroke="#000" stroke-width="1"/><path d="M9.8 168.5 Q9.8 163.5 12.8 161" fill="none" stroke="#000" stroke-width="1.2" stroke-dasharray="2 1"/><path d="M14.6 158.8 L17.8 155" stroke="#000" stroke-width="1.2" stroke-dasharray="1.5 1"/><rect x="12.3" y="158.6" width="2.6" height="2.6" fill="#fff" stroke="#000" stroke-width="1.1"/><path d="M15.5 162.5 V169.5 L17.4 167.6 L20.8 167.4 Z" fill="#fff" stroke="#000" stroke-width="1.1"/><rect x="4" y="176" width="20" height="1" fill="#C5C4CC"/><path d="M9.5 188.5 L19.5 198.5" stroke="#000" stroke-width="1.1"/><rect x="8.5" y="187" width="2.5" height="2.5" fill="#fff" stroke="#555" stroke-width="0.8"/><rect x="18.5" y="197" width="2.5" height="2.5" fill="#fff" stroke="#555" stroke-width="0.8"/><path d="M14.6 208.3 V211" stroke="#202030" stroke-width="1.2"/><path d="M14.6 210.5 L12.6 215.2 H16.6 Z" fill="#fff" stroke="#202030" stroke-width="1.1"/><rect x="12.3" y="215.2" width="4.6" height="2.4" fill="#fff" stroke="#202030" stroke-width="1"/><rect x="11.6" y="217.6" width="6.2" height="7" fill="url(#tbx)" stroke="#202030" stroke-width="1.2"/><rect x="6.9" y="236" width="2.7" height="2.6" fill="#000"/><path d="M9.3 238.4 L12.6 241.6 M14.6 243.6 L17.6 246.6" stroke="#000" stroke-width="1.1" stroke-dasharray="1.2 0.6"/><rect x="12.4" y="241.4" width="2.3" height="2.3" fill="#fff" stroke="#000" stroke-width="1"/><rect x="17.2" y="246.1" width="2.6" height="2.5" fill="#000"/><path d="M15.3 240.6 L16.6 235.4 Q19 234 22.6 234.4 Q22.2 237.6 19.2 239 Z" fill="#fff" stroke="#000" stroke-width="1.1"/><rect x="9.5" y="259.5" width="11" height="11" fill="url(#tbx)" stroke="#303050"/><ellipse cx="15" cy="289" rx="6.8" ry="4.6" fill="url(#tbx)" stroke="#303050"/><path d="M8 319 L14.5 307.5 L21.5 319" fill="none" stroke="#0A0A50" stroke-width="2.2"/><path d="M10.5 315 H19" stroke="#0A0A50" stroke-width="1.8"/><path d="M7 319.2 H11 M18 319.2 H22.5" stroke="#0A0A50" stroke-width="1.2"/><path d="M6.5 333 L4 335.5 L6.5 338 Z" fill="#B0B0B8"/></g></svg>
<div class="a" style="left:733px;top:114px;width:1px;height:577px;background:#F7F7F9"></div><div class="a" style="left:734px;top:114px;width:289px;height:19px;box-sizing:border-box;border:1px solid #A6A6AA;border-right-color:#C8C8CC;background:#EDECF1"></div><div class="t" style="left:735.60px;top:119.12px;font-size:11.2px;letter-spacing:-0.25px">Control Panel</div><svg class="a" style="left:1009px;top:119px" width="11" height="10"><path d="M1.5 1 L9.5 9 M9.5 1 L1.5 9" stroke="#8A8A8E" stroke-width="1"/></svg><div class="a" style="left:734.5px;top:142.0px;width:268.0px;height:45.5px;box-sizing:border-box;border:1px solid #D3D2DA;border-radius:4px"></div><div class="a" style="left:739.5px;top:141.0px;width:106.0px;height:3px;background:#EDECF1"></div><div class="t" style="left:743.00px;top:137.99px;font-size:11px;letter-spacing:-0.35px;color:#5A72A8">Communication mode</div><div class="a" style="left:767.0px;top:155.0px;width:93.0px;height:22.0px;box-sizing:border-box;border:1px solid #3A5FA8;border-radius:3px;background:linear-gradient(#FAFCFF 0%,#EEF3FA 45%,#D7E1F0 70%,#AFC1DD 100%)"></div><div class="t" style="left:767.00px;top:160.65px;width:93.00px;text-align:center;font-size:11px;letter-spacing:-0.2px">Select Mode</div><div class="a" style="left:866px;top:155px;width:127px;height:20px;box-sizing:border-box;border:1px solid #A0A0A4;border-right-color:#fff;border-bottom-color:#fff;background:#EDECF1"></div><div class="t" style="left:870.40px;top:157.59px;font-size:11px;letter-spacing:-0.2px;color:#101010">IP: 192.168.8.8</div><div class="a" style="left:734.5px;top:199.5px;width:268.0px;height:186.0px;box-sizing:border-box;border:1px solid #D3D2DA;border-radius:4px"></div><div class="a" style="left:739.5px;top:198.5px;width:71.0px;height:3px;background:#EDECF1"></div><div class="t" style="left:743.00px;top:195.49px;font-size:11px;letter-spacing:-0.35px;color:#5A72A8">Layer Options</div><div class="a" style="left:739px;top:214px;width:260px;height:137px;box-sizing:border-box;border:1px solid #A8A8AC;background:#fff"></div><svg class="a" style="left:0;top:0" width="1024" height="400"><rect x="781.5" y="215" width="1" height="135" fill="#E4E4E8"/><rect x="846.5" y="215" width="1" height="135" fill="#E4E4E8"/><rect x="900.5" y="215" width="1" height="135" fill="#E4E4E8"/><rect x="954.5" y="215" width="1" height="135" fill="#E4E4E8"/><rect x="993" y="215" width="1" height="135" fill="#EAEAEE"/><rect x="740" y="236" width="258" height="1" fill="#EAEAED"/><rect x="740" y="252" width="258" height="1" fill="#EAEAED"/><rect x="740" y="270" width="258" height="1" fill="#EAEAED"/><rect x="740" y="286" width="258" height="1" fill="#EAEAED"/><rect x="740" y="304" width="258" height="1" fill="#EAEAED"/><rect x="740" y="320" width="258" height="1" fill="#EAEAED"/><rect x="740" y="338" width="258" height="1" fill="#EAEAED"/><rect x="741" y="236" width="40" height="16" fill="#000"/><rect x="955.5" y="236.5" width="14" height="15" fill="#fff" stroke="#A0A0A8"/><path d="M958 243.5 L961 247 L966.5 240" fill="none" stroke="#000" stroke-width="2"/></svg><div class="t" style="left:747.60px;top:220.39px;font-size:11px;letter-spacing:-0.2px">Layer</div><div class="t" style="left:786.00px;top:220.39px;font-size:11px;letter-spacing:-0.2px">Mode</div><div class="t" style="left:851.80px;top:220.39px;font-size:11px;letter-spacing:-0.2px">Speed</div><div class="t" style="left:906.60px;top:220.39px;font-size:11px;letter-spacing:-0.2px">Power</div><div class="t" style="left:959.60px;top:220.39px;font-size:11px;letter-spacing:-0.2px">Ou...</div><div class="t" style="left:783.50px;top:238.99px;font-size:11px;letter-spacing:-0.2px">Engrave</div><div class="t" style="left:848.50px;top:238.99px;font-size:11px;letter-spacing:-0.2px">100.00</div><div class="t" style="left:902.80px;top:238.99px;font-size:11px;letter-spacing:-0.2px">100.00</div><div class="a" style="left:773.0px;top:356.0px;width:39.0px;height:24.0px;box-sizing:border-box;border:1px solid #3B4A6B;border-radius:3px;background:linear-gradient(#FAFCFF 0%,#EEF3FA 45%,#D7E1F0 70%,#AFC1DD 100%)"></div><div class="t" style="left:773.00px;top:362.65px;width:39.00px;text-align:center;font-size:11px;letter-spacing:-0.2px">Up</div><div class="a" style="left:821.0px;top:356.0px;width:39.0px;height:24.0px;box-sizing:border-box;border:1px solid #3B4A6B;border-radius:3px;background:linear-gradient(#FAFCFF 0%,#EEF3FA 45%,#D7E1F0 70%,#AFC1DD 100%)"></div><div class="t" style="left:821.00px;top:362.65px;width:39.00px;text-align:center;font-size:11px;letter-spacing:-0.2px">Down</div><div class="a" style="left:873.0px;top:356.0px;width:39.0px;height:24.0px;box-sizing:border-box;border:1px solid #3B4A6B;border-radius:3px;background:linear-gradient(#FAFCFF 0%,#EEF3FA 45%,#D7E1F0 70%,#AFC1DD 100%)"></div><div class="t" style="left:873.00px;top:362.65px;width:39.00px;text-align:center;font-size:11px;letter-spacing:-0.2px">Top</div><div class="a" style="left:921.0px;top:356.0px;width:39.0px;height:24.0px;box-sizing:border-box;border:1px solid #3B4A6B;border-radius:3px;background:linear-gradient(#FAFCFF 0%,#EEF3FA 45%,#D7E1F0 70%,#AFC1DD 100%)"></div><div class="t" style="left:921.00px;top:362.65px;width:39.00px;text-align:center;font-size:11px;letter-spacing:-0.2px">Bottom</div><div class="a" style="left:734.5px;top:398.5px;width:268.0px;height:198.0px;box-sizing:border-box;border:1px solid #D3D2DA;border-radius:4px"></div><div class="a" style="left:739.5px;top:397.5px;width:81.0px;height:3px;background:#EDECF1"></div><div class="t" style="left:743.00px;top:394.49px;font-size:11px;letter-spacing:-0.35px;color:#5A72A8">Machine Control</div><div class="a" style="left:741.0px;top:411.0px;width:61.0px;height:26.5px;box-sizing:border-box;border:1px solid #3B4A6B;border-radius:3px;background:linear-gradient(#FAFCFF 0%,#EEF3FA 45%,#D7E1F0 70%,#AFC1DD 100%)"></div><div class="t" style="left:741.00px;top:418.90px;width:61.00px;text-align:center;font-size:11px;letter-spacing:-0.2px">Origin</div><div class="a" style="left:806.0px;top:411.0px;width:61.0px;height:26.5px;box-sizing:border-box;border:1px solid #3B4A6B;border-radius:3px;background:linear-gradient(#FAFCFF 0%,#EEF3FA 45%,#D7E1F0 70%,#AFC1DD 100%)"></div><div class="t" style="left:806.00px;top:418.90px;width:61.00px;text-align:center;font-size:11px;letter-spacing:-0.2px">Run Box</div><div class="a" style="left:870.0px;top:411.0px;width:61.0px;height:26.5px;box-sizing:border-box;border:1px solid #3B4A6B;border-radius:3px;background:linear-gradient(#FAFCFF 0%,#EEF3FA 45%,#D7E1F0 70%,#AFC1DD 100%)"></div><div class="t" style="left:870.00px;top:418.90px;width:61.00px;text-align:center;font-size:11px;letter-spacing:-0.2px">Clip Box</div><div class="a" style="left:935.0px;top:411.0px;width:61.0px;height:26.5px;box-sizing:border-box;border:1px solid #3B4A6B;border-radius:3px;background:linear-gradient(#FAFCFF 0%,#EEF3FA 45%,#D7E1F0 70%,#AFC1DD 100%)"></div><div class="t" style="left:935.00px;top:418.90px;width:61.00px;text-align:center;font-size:11px;letter-spacing:-0.2px">Light</div><div class="a" style="left:741.0px;top:442.0px;width:61.0px;height:26.5px;box-sizing:border-box;border:1px solid #3B4A6B;border-radius:3px;background:linear-gradient(#FAFCFF 0%,#EEF3FA 45%,#D7E1F0 70%,#AFC1DD 100%)"></div><div class="t" style="left:741.00px;top:449.90px;width:61.00px;text-align:center;font-size:11px;letter-spacing:-0.2px">Download</div><div class="a" style="left:806.0px;top:442.0px;width:61.0px;height:26.5px;box-sizing:border-box;border:1px solid #3B4A6B;border-radius:3px;background:linear-gradient(#FAFCFF 0%,#EEF3FA 45%,#D7E1F0 70%,#AFC1DD 100%)"></div><div class="t" style="left:806.00px;top:449.90px;width:61.00px;text-align:center;font-size:11px;letter-spacing:-0.2px">Start</div><div class="a" style="left:870.0px;top:442.0px;width:61.0px;height:26.5px;box-sizing:border-box;border:1px solid #3B4A6B;border-radius:3px;background:linear-gradient(#FAFCFF 0%,#EEF3FA 45%,#D7E1F0 70%,#AFC1DD 100%)"></div><div class="a" style="left:871.0px;top:449.90px;width:59.0px;height:14px;overflow:hidden;display:flex;justify-content:center;white-space:pre;line-height:1;font-size:11px;letter-spacing:-0.2px">Pause/Continue</div><div class="a" style="left:935.0px;top:442.0px;width:61.0px;height:26.5px;box-sizing:border-box;border:1px solid #3B4A6B;border-radius:3px;background:linear-gradient(#FAFCFF 0%,#EEF3FA 45%,#D7E1F0 70%,#AFC1DD 100%)"></div><div class="t" style="left:935.00px;top:449.90px;width:61.00px;text-align:center;font-size:11px;letter-spacing:-0.2px">Stop</div><div class="a" style="left:810.0px;top:484.0px;width:39.0px;height:32.0px;box-sizing:border-box;border:1px solid #3B4A6B;border-radius:3px;background:linear-gradient(#FAFCFF 0%,#EEF3FA 45%,#D7E1F0 70%,#AFC1DD 100%)"></div><div class="t" style="left:810.00px;top:494.65px;width:39.00px;text-align:center;font-size:11px;letter-spacing:-0.2px">Y+</div><div class="a" style="left:927.0px;top:484.0px;width:39.0px;height:32.0px;box-sizing:border-box;border:1px solid #3B4A6B;border-radius:3px;background:linear-gradient(#FAFCFF 0%,#EEF3FA 45%,#D7E1F0 70%,#AFC1DD 100%)"></div><div class="t" style="left:927.00px;top:494.65px;width:39.00px;text-align:center;font-size:11px;letter-spacing:-0.2px">Z+</div><div class="a" style="left:767.0px;top:520.5px;width:39.0px;height:31.0px;box-sizing:border-box;border:1px solid #3B4A6B;border-radius:3px;background:linear-gradient(#FAFCFF 0%,#EEF3FA 45%,#D7E1F0 70%,#AFC1DD 100%)"></div><div class="t" style="left:767.00px;top:530.65px;width:39.00px;text-align:center;font-size:11px;letter-spacing:-0.2px">X-</div><div class="a" style="left:810.0px;top:520.5px;width:39.0px;height:31.0px;box-sizing:border-box;border:1px solid #3B4A6B;border-radius:3px;background:linear-gradient(#FAFCFF 0%,#EEF3FA 45%,#D7E1F0 70%,#AFC1DD 100%)"></div><div class="t" style="left:810.00px;top:530.65px;width:39.00px;text-align:center;font-size:11px;letter-spacing:-0.2px">Datum</div><div class="a" style="left:852.5px;top:520.5px;width:38.5px;height:31.0px;box-sizing:border-box;border:1px solid #3B4A6B;border-radius:3px;background:linear-gradient(#FAFCFF 0%,#EEF3FA 45%,#D7E1F0 70%,#AFC1DD 100%)"></div><div class="t" style="left:852.50px;top:530.65px;width:38.50px;text-align:center;font-size:11px;letter-spacing:-0.2px">X+</div><div class="a" style="left:927.0px;top:520.5px;width:39.0px;height:31.0px;box-sizing:border-box;border:1px solid #3B4A6B;border-radius:3px;background:linear-gradient(#FAFCFF 0%,#EEF3FA 45%,#D7E1F0 70%,#AFC1DD 100%)"></div><div class="t" style="left:927.00px;top:530.65px;width:39.00px;text-align:center;font-size:11px;letter-spacing:-0.2px">Datum</div><div class="a" style="left:810.0px;top:556.5px;width:39.0px;height:31.5px;box-sizing:border-box;border:1px solid #3B4A6B;border-radius:3px;background:linear-gradient(#FAFCFF 0%,#EEF3FA 45%,#D7E1F0 70%,#AFC1DD 100%)"></div><div class="t" style="left:810.00px;top:566.90px;width:39.00px;text-align:center;font-size:11px;letter-spacing:-0.2px">Y-</div><div class="a" style="left:927.0px;top:556.5px;width:39.0px;height:31.5px;box-sizing:border-box;border:1px solid #3B4A6B;border-radius:3px;background:linear-gradient(#FAFCFF 0%,#EEF3FA 45%,#D7E1F0 70%,#AFC1DD 100%)"></div><div class="t" style="left:927.00px;top:566.90px;width:39.00px;text-align:center;font-size:11px;letter-spacing:-0.2px">Z-</div><div class="a" style="left:734.5px;top:597.5px;width:268.0px;height:67.5px;box-sizing:border-box;border:1px solid #D3D2DA;border-radius:4px"></div><div class="a" style="left:761.0px;top:605.0px;width:119.5px;height:23.5px;box-sizing:border-box;border:1px solid #3B4A6B;border-radius:3px;background:linear-gradient(#FAFCFF 0%,#EEF3FA 45%,#D7E1F0 70%,#AFC1DD 100%)"></div><div class="t" style="left:761.00px;top:611.40px;width:119.50px;text-align:center;font-size:11px;letter-spacing:-0.2px">Read Current Pos:</div><div class="a" style="left:761.0px;top:632.0px;width:119.5px;height:24.0px;box-sizing:border-box;border:1px solid #3B4A6B;border-radius:3px;background:linear-gradient(#FAFCFF 0%,#EEF3FA 45%,#D7E1F0 70%,#AFC1DD 100%)"></div><div class="t" style="left:761.00px;top:638.65px;width:119.50px;text-align:center;font-size:11px;letter-spacing:-0.2px">Move to Pos:</div><div class="t" style="left:896.50px;top:614.19px;font-size:11px;letter-spacing:-0.2px">X=</div><div class="t" style="left:896.50px;top:640.19px;font-size:11px;letter-spacing:-0.2px">Y=</div><div class="a" style="left:912.5px;top:607px;width:66px;height:23px;box-sizing:border-box;border:1px solid #A8A8AC;background:#fff"></div><div class="a" style="left:912.5px;top:633px;width:66px;height:23px;box-sizing:border-box;border:1px solid #A8A8AC;background:#fff"></div><div class="t" style="left:916.00px;top:612.19px;font-size:11px;letter-spacing:-0.2px">0.00</div><div class="t" style="left:916.00px;top:638.19px;font-size:11px;letter-spacing:-0.2px">0.00</div>
<svg class="a" style="left:0;top:688" width="1024" height="30"><g transform="translate(0,-688)"><rect x="4" y="693" width="3" height="1" fill="#C9C8D0"/><rect x="4" y="695" width="3" height="1" fill="#C9C8D0"/><rect x="4" y="697" width="3" height="1" fill="#C9C8D0"/><rect x="4" y="699" width="3" height="1" fill="#C9C8D0"/><rect x="4" y="701" width="3" height="1" fill="#C9C8D0"/><rect x="4" y="703" width="3" height="1" fill="#C9C8D0"/><rect x="4" y="705" width="3" height="1" fill="#C9C8D0"/><rect x="4" y="707" width="3" height="1" fill="#C9C8D0"/><rect x="4" y="709" width="3" height="1" fill="#C9C8D0"/><rect x="222" y="693" width="3" height="1" fill="#C9C8D0"/><rect x="222" y="695" width="3" height="1" fill="#C9C8D0"/><rect x="222" y="697" width="3" height="1" fill="#C9C8D0"/><rect x="222" y="699" width="3" height="1" fill="#C9C8D0"/><rect x="222" y="701" width="3" height="1" fill="#C9C8D0"/><rect x="222" y="703" width="3" height="1" fill="#C9C8D0"/><rect x="222" y="705" width="3" height="1" fill="#C9C8D0"/><rect x="222" y="707" width="3" height="1" fill="#C9C8D0"/><rect x="222" y="709" width="3" height="1" fill="#C9C8D0"/><path d="M15.5 696 V708" stroke="#ABABAF"/><rect x="17.5" y="697.5" width="6" height="3" fill="none" stroke="#ABABAF"/><rect x="17.5" y="702.5" width="9" height="3" fill="none" stroke="#ABABAF"/><path d="M17 707.5 H22" stroke="#ABABAF"/><path d="M49.5 696 V708" stroke="#ABABAF"/><rect x="41.5" y="697.5" width="6" height="3" fill="none" stroke="#ABABAF"/><rect x="38.5" y="702.5" width="9" height="3" fill="none" stroke="#ABABAF"/><path d="M42 707.5 H47" stroke="#ABABAF"/><path d="M60.5 696.5 H73" stroke="#ABABAF" stroke-width="1.5"/><rect x="61.5" y="698.5" width="3" height="8" fill="none" stroke="#ABABAF"/><rect x="66.5" y="698.5" width="3" height="5" fill="none" stroke="#ABABAF"/><path d="M71.5 699 V704" stroke="#ABABAF"/><path d="M83 707.5 H96" stroke="#ABABAF" stroke-width="1.5"/><rect x="84.5" y="697.5" width="3" height="8" fill="none" stroke="#ABABAF"/><rect x="89.5" y="700.5" width="3" height="5" fill="none" stroke="#ABABAF"/><path d="M94.5 700 V705" stroke="#ABABAF"/><path d="M106.5 702 H119" stroke="#ABABAF"/><rect x="109.5" y="697.5" width="3" height="9" fill="none" stroke="#ABABAF"/><rect x="114.5" y="699.5" width="3" height="5" fill="none" stroke="#ABABAF"/><path d="M135.5 696 V708" stroke="#ABABAF"/><rect x="131.5" y="698.5" width="9" height="3" fill="none" stroke="#ABABAF"/><rect x="132.5" y="703.5" width="7" height="3" fill="none" stroke="#ABABAF"/><rect x="153.5" y="695.5" width="12" height="12" fill="none" stroke="#ABABAF"/><path d="M153.5 699.5 H165.5 M153.5 703.5 H165.5 M157.5 699.5 V707.5 M161.5 699.5 V707.5" stroke="#ABABAF"/><rect x="173" y="694" width="1" height="17" fill="#C8C7CE"/><path d="M181 702 H197 M189 695 V710" stroke="#B0B0B4" stroke-width="1.5"/><rect x="185" y="697" width="8" height="10" fill="#B0B0B4"/><path d="M208 708.3 H213 L210.5 711 Z" fill="#9B9BA2"/><rect x="231" y="695" width="16" height="15" fill="#000000"/><rect x="254" y="695" width="16" height="15" fill="#0000FF"/><rect x="277" y="695" width="16" height="15" fill="#FF0000"/><rect x="300" y="695" width="16" height="15" fill="#00FF00"/><rect x="323" y="695" width="16" height="15" fill="#FF99CC"/><rect x="346" y="695" width="16" height="15" fill="#FFFF00"/><rect x="369" y="695" width="16" height="15" fill="#00FFFF"/><rect x="392" y="695" width="16" height="15" fill="#996633"/><rect x="415" y="695" width="16" height="15" fill="#008000"/><rect x="438" y="695" width="16" height="15" fill="#9999CC"/><rect x="461" y="695" width="16" height="15" fill="#800080"/><rect x="484" y="695" width="16" height="15" fill="#0099CC"/><rect x="507" y="695" width="16" height="15" fill="#FF9900"/><rect x="530" y="695" width="16" height="15" fill="#99CCFF"/><rect x="553" y="695" width="16" height="15" fill="#808080"/><rect x="576" y="695" width="16" height="15" fill="#000080"/><rect x="599" y="695" width="16" height="15" fill="#808000"/><rect x="622" y="695" width="16" height="15" fill="#FF0099"/><rect x="645" y="695" width="16" height="15" fill="#008080"/><rect x="668" y="695" width="16" height="15" fill="#99FF00"/><path d="M694.5 708.5 H700 L697.2 711 Z" fill="#9B9BA2"/></g></svg>
<div class="t" style="left:1.50px;top:720.29px;font-size:11px;letter-spacing:-0.1px">Right</div><div class="a" style="left:274.0px;top:718px;width:146.0px;height:16px;box-sizing:border-box;border:1px solid #A6A6AA;border-right-color:#B4B4B8;border-bottom:none"></div><div class="t" style="left:276.00px;top:721.69px;font-size:11px;letter-spacing:0px">X=416.95;Y=343.23</div><div class="a" style="left:421.5px;top:718px;width:136.0px;height:16px;box-sizing:border-box;border:1px solid #A6A6AA;border-right-color:#B4B4B8;border-bottom:none"></div><div class="t" style="left:423.50px;top:721.69px;font-size:11px;letter-spacing:0px">Worked Times:00:00:00</div><div class="a" style="left:560.5px;top:718px;width:204.5px;height:16px;box-sizing:border-box;border:1px solid #A6A6AA;border-right-color:#B4B4B8;border-bottom:none"></div><div class="t" style="left:562.50px;top:721.69px;font-size:11px;letter-spacing:0px">Laser Pos:X=0.00;Y=0.00</div><div class="a" style="left:766.5px;top:718px;width:252.5px;height:16px;box-sizing:border-box;border:1px solid #A6A6AA;border-right-color:#FAFAFC;border-bottom:none"></div><div class="t" style="left:768.50px;top:721.69px;font-size:11px;letter-spacing:0px">Lightobject.com</div><div class="a" style="left:0;top:733px;width:1024px;height:1px;background:#F7F7F9"></div><div class="a" style="left:0;top:734px;width:1024px;height:4px;background:linear-gradient(#0C0E12 0px,#0C0E12 1px,#3E424C 1px,#4E525C 4px)"></div>
</body></html>
